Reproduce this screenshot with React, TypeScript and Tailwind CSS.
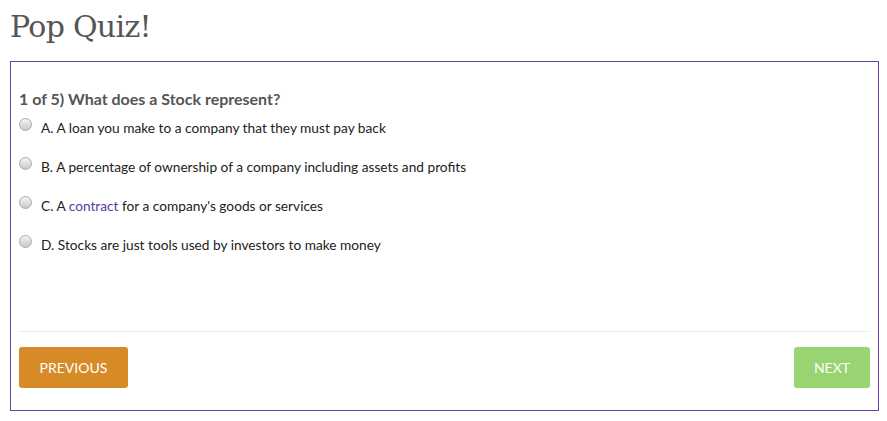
import { useState } from "react";

const options = [
  { key: "A", text: "A loan you make to a company that they must pay back" },
  { key: "B", text: "A percentage of ownership of a company including assets and profits" },
  { key: "C", text: "contract" },
  { key: "D", text: "Stocks are just tools used by investors to make money" },
];

function Radio({ checked }: { checked: boolean }) {
  return (
    <span className="relative inline-block w-[13px] h-[13px] rounded-full border border-[#a9a9a9] bg-gradient-to-b from-[#f4f4f4] to-[#c9c9c9] shrink-0">
      {checked && <span className="absolute inset-[3px] rounded-full bg-[#333]" />}
    </span>
  );
}

export default function App() {
  const [answer, setAnswer] = useState("");

  return (
    <div className="w-[887px] h-[421px] bg-white px-[10px] pt-[8px] font-['Lato',sans-serif]">
      <h1 className="text-[30px] leading-[38px] text-[#555] font-['Roboto_Slab','DejaVu_Serif',serif] font-light tracking-[-0.7px]">
        Pop Quiz!
      </h1>

      <div className="mt-[15px] w-[869px] h-[350px] border border-[#6b3fa8] px-[8px] pt-[27px] flex flex-col">
        <p className="text-[16px] leading-[20px] font-bold text-[#555]">
          1 of 5) What does a Stock represent?
        </p>

        <div className="mt-[9px] flex flex-col gap-[19px]">
          {options.map((o) => (
            <label
              key={o.key}
              className="flex items-center gap-[9px] h-[20px] text-[13.7px] text-[#222] cursor-pointer"
              onClick={() => setAnswer(o.key)}
            >
              <span className="-mt-[4px]">
                <Radio checked={answer === o.key} />
              </span>
              {o.key === "C" ? (
                <span>
                  C. A <span className="text-[#5b3a9e]">contract</span> for a company&#39;s goods or services
                </span>
              ) : (
                <span>
                  {o.key}. {o.text}
                </span>
              )}
            </label>
          ))}
        </div>

        <div className="mt-auto border-t border-[#eeeeee] pt-[15px] pb-[22px] flex justify-between">
          <button className="w-[109px] h-[41px] rounded-[3px] bg-[#d68b26] text-white text-[14px]">
            PREVIOUS
          </button>
          <button className="w-[76px] h-[41px] rounded-[3px] bg-[#98d471] text-white text-[14px]">
            NEXT
          </button>
        </div>
      </div>
    </div>
  );
}
